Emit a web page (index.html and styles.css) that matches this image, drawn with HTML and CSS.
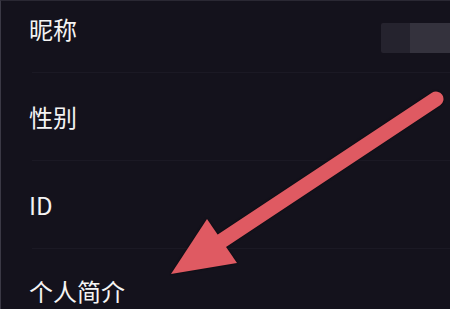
FILE: index.html
```html
<!DOCTYPE html>
<html lang="zh-CN">
  <head>
    <meta charset="UTF-8" />
    <meta name="viewport" content="width=device-width, initial-scale=1.0" />
    <title>编辑资料</title>
    <link rel="stylesheet" href="styles.css">
  </head>
  <body>
    <ul class="profile-list">
      <li class="profile-row">
        <span class="label">昵称</span>
        <span class="value-blur">
          <span class="blur-a"></span>
          <span class="blur-b"></span>
        </span>
      </li>
      <li class="profile-row">
        <span class="label">性别</span>
      </li>
      <li class="profile-row">
        <span class="label">ID</span>
      </li>
      <li class="profile-row last">
        <span class="label">个人简介</span>
      </li>
    </ul>

    <svg class="arrow" width="450" height="309" viewBox="0 0 450 309">
      <line x1="436" y1="99" x2="220" y2="242" stroke="#df5a62" stroke-width="15" stroke-linecap="round" />
      <polygon points="171,274 207,219 237,263" fill="#df5a62" />
    </svg>
  </body>
</html>
```

FILE: styles.css
```css
html,
body {
  height: 100%;
}

body {
  margin: 0;
  background-color: #14121c;
  font-family: "Noto Sans CJK SC", "Noto Sans", sans-serif;
  color: #f4f4f4;
  overflow: hidden;
  position: relative;
  border-left: 1px solid #3b3945;
  border-top: 1px solid #2a2833;
  box-sizing: border-box;
}

.profile-list {
  list-style: none;
  margin: -16px 0 0 0;
  padding: 0;
}

.profile-row {
  height: 87px;
  display: flex;
  align-items: center;
  padding-left: 28px;
  position: relative;
}

.profile-row::after {
  content: "";
  position: absolute;
  left: 31px;
  right: 0;
  bottom: -1px;
  height: 1px;
  background: #1b1924;
}

.profile-row + .profile-row {
  margin-top: 1px;
}

.profile-row.last {
  height: auto;
  align-items: flex-start;
  padding-top: 30px;
}

.profile-row.last::after {
  display: none;
}

.label {
  font-size: 24px;
  line-height: 1;
}

.value-blur {
  margin-left: auto;
  margin-top: 19px;
  display: flex;
  height: 30px;
}

.blur-a {
  width: 29px;
  background: #25232e;
  border-radius: 2px 0 0 2px;
}

.blur-b {
  width: 40px;
  background: #34323d;
}

.arrow {
  position: absolute;
  top: -1px;
  left: -1px;
  filter: drop-shadow(0 0 1px rgba(0, 0, 0, 0.6));
}
```
